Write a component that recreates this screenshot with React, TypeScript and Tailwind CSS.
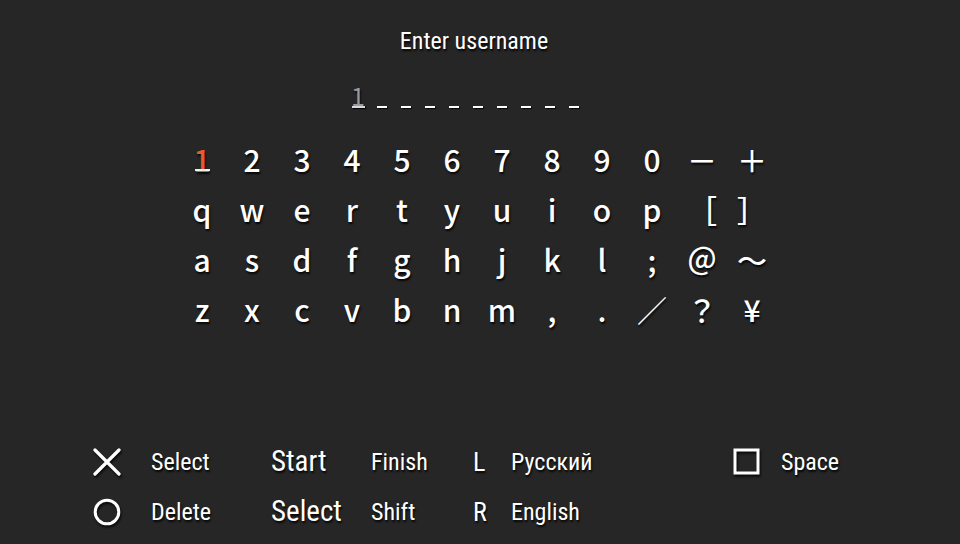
import React from "react";

const rows: string[][] = [
  ["1", "2", "3", "4", "5", "6", "7", "8", "9", "0", "－", "＋"],
  ["q", "w", "e", "r", "t", "y", "u", "i", "o", "p", "［", "］"],
  ["a", "s", "d", "f", "g", "h", "j", "k", "l", ";", "＠", "～"],
  ["z", "x", "c", "v", "b", "n", "m", ",", ".", "／", "？", "¥"],
];

const shadow = "[text-shadow:1px_2px_2px_rgba(0,0,0,0.85)]";
const cond = "font-['Roboto_Condensed','Roboto',sans-serif]";

function XIcon() {
  return (
    <svg width="28" height="28" viewBox="0 0 28 28" className="drop-shadow-[1px_2px_1px_rgba(0,0,0,0.8)]">
      <path d="M2 2 L26 26 M26 2 L2 26" stroke="#fff" strokeWidth="3.2" strokeLinecap="round" />
    </svg>
  );
}
function OIcon() {
  return (
    <svg width="28" height="28" viewBox="0 0 28 28" className="drop-shadow-[1px_2px_1px_rgba(0,0,0,0.8)]">
      <circle cx="14" cy="14" r="11.8" stroke="#fff" strokeWidth="3" fill="none" />
    </svg>
  );
}
function SqIcon() {
  return (
    <svg width="28" height="28" viewBox="0 0 28 28" className="drop-shadow-[1px_2px_1px_rgba(0,0,0,0.8)]">
      <rect x="2" y="2" width="23" height="23" stroke="#fff" strokeWidth="3" fill="none" />
    </svg>
  );
}

export default function App() {
  return (
    <div className={`w-[960px] h-[544px] bg-[#262626] text-white flex flex-col overflow-hidden ${shadow}`}>
      {/* Title */}
      <div className="h-[82px] flex items-start justify-center pt-[26px] pr-[12px]">
        <span className={`${cond} text-[24px] leading-[30px]`}>Enter username</span>
      </div>
      {/* Username field */}
      <div className="h-[52px] flex pl-[346px]">
        {Array.from({ length: 10 }).map((_, i) => (
          <div key={i} className="w-[24px] h-[30px] relative flex justify-center">
            {i === 0 && (
              <span className="absolute top-[1px] font-['Noto_Sans_CJK_JP',sans-serif] text-[25px] leading-[24px] text-[#9a9a9a]">1</span>
            )}
            <div className={`absolute top-[24px] h-[2px] ${i === 0 ? "w-[13px] bg-[#d8d8d8]" : "w-[10px] bg-white"} shadow-[1px_1px_1px_rgba(0,0,0,0.8)]`} />
          </div>
        ))}
      </div>
      {/* Keyboard */}
      <div className="flex flex-col pl-[177px]">
        {rows.map((r, ri) => (
          <div key={ri} className="flex h-[50px]">
            {r.map((c, ci) => (
              <div key={ci} className="w-[50px] h-[50px] relative flex items-center justify-center">
                <span
                  className={`font-['Noto_Sans_CJK_JP',sans-serif] font-medium text-[30px] leading-[30px] ${
                    ri === 0 && ci === 0 ? "text-[#e65a30]" : "text-white"
                  }`}
                >
                  {c}
                </span>
                {ri === 0 && ci === 0 && (
                  <div className="absolute top-[35px] left-[18px] w-[15px] h-[2px] bg-[#eeeeee]" />
                )}
              </div>
            ))}
          </div>
        ))}
      </div>
      <div className="flex-1" />
      {/* Legend */}
      <div className={`${cond} flex flex-col pl-[93px] pb-[7px]`}>
        <div className="flex items-center h-[50px]">
          <div className="w-[58px] flex"><XIcon /></div>
          <span className="w-[120px] text-[24px]">Select</span>
          <span className="w-[100px] text-[29px]">Start</span>
          <span className="w-[102px] text-[24px]">Finish</span>
          <span className="w-[38px] text-[26px]">L</span>
          <span className="w-[222px] text-[24px]">Русский</span>
          <div className="w-[48px] flex"><SqIcon /></div>
          <span className="text-[24px]">Space</span>
        </div>
        <div className="flex items-center h-[50px]">
          <div className="w-[58px] flex"><OIcon /></div>
          <span className="w-[120px] text-[24px]">Delete</span>
          <span className="w-[100px] text-[29px]">Select</span>
          <span className="w-[102px] text-[24px]">Shift</span>
          <span className="w-[38px] text-[26px]">R</span>
          <span className="text-[24px]">English</span>
        </div>
      </div>
    </div>
  );
}
